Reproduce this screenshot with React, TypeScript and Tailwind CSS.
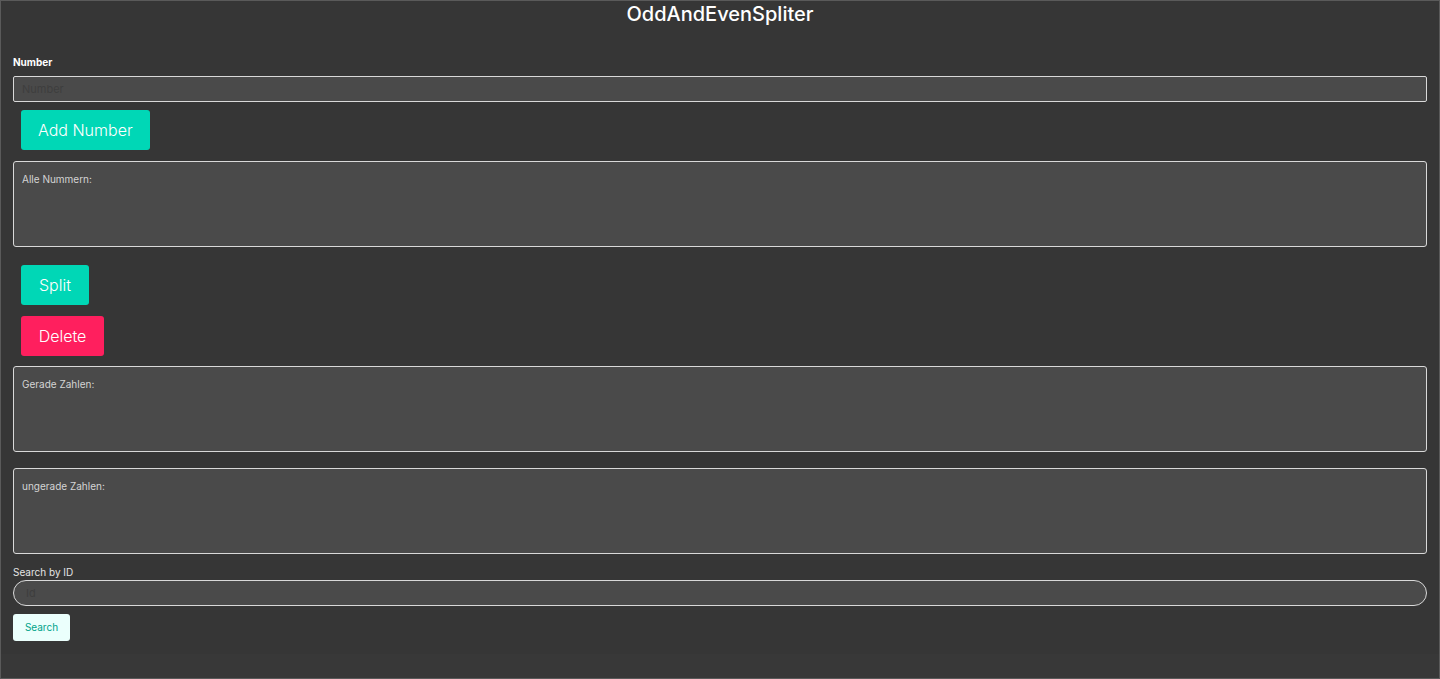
import React from 'react';

const font = { fontFamily: 'Inter, "Liberation Sans", sans-serif' };

const Box: React.FC<{ label: string; className?: string }> = ({ label, className }) => (
  <div className={`h-[86px] rounded-[3px] border border-[#d9d9d9] bg-[#4a4a4a] px-2 pt-[10px] ${className ?? ''}`}>
    <p className="text-[10px] leading-[14px] text-[#d4d4d4]">{label}</p>
  </div>
);

export default function App() {
  return (
    <div style={font} className="flex min-h-[679px] flex-col border border-[#5a5a5a] bg-[#363636]">
      <div className="px-3">
        <h1 className="pt-[2px] text-center text-[20px] font-medium leading-[22px] text-white">OddAndEvenSpliter</h1>

        <label className="mt-[30px] block text-[10px] font-bold leading-[14px] text-white">Number</label>
        <input
          placeholder="Number"
          className="mt-[7px] block h-[26px] w-full rounded-[2px] border border-[#d9d9d9] bg-[#4a4a4a] px-2 text-[11px] text-white outline-none placeholder:text-[#3e3e3e]"
        />

        <div className="ml-2 mt-2 flex flex-col items-start">
          <button className="h-10 rounded-[3px] bg-[#00d7b6] px-[17px] text-[16px] font-light text-white">Add Number</button>
        </div>

        <Box label="Alle Nummern:" className="mt-[11px]" />

        <div className="ml-2 mt-[18px] flex flex-col items-start gap-[11px]">
          <button className="h-10 w-[68px] rounded-[3px] bg-[#00d7b6] text-[16px] font-light text-white">Split</button>
          <button className="h-10 w-[83px] rounded-[3px] bg-[#ff1f5e] text-[16px] font-light text-white">Delete</button>
        </div>

        <Box label="Gerade Zahlen:" className="mt-[10px]" />
        <Box label="ungerade Zahlen:" className="mt-[16px]" />

        <label className="mt-[11px] block text-[10px] leading-[14px] text-[#e4e4e4]">Search by ID</label>
        <input
          placeholder="Id"
          className="mt-[1px] block h-[26px] w-full rounded-full border border-[#d9d9d9] bg-[#4a4a4a] px-3 text-[11px] text-white outline-none placeholder:text-[#3e3e3e]"
        />
        <button className="mt-2 h-[27px] w-[57px] rounded-[3px] bg-[#ebfffc] text-[10px] text-[#00a38a]">Search</button>
      </div>
      <div className="mt-[13px] flex-1 bg-[#383838]" />
    </div>
  );
}
